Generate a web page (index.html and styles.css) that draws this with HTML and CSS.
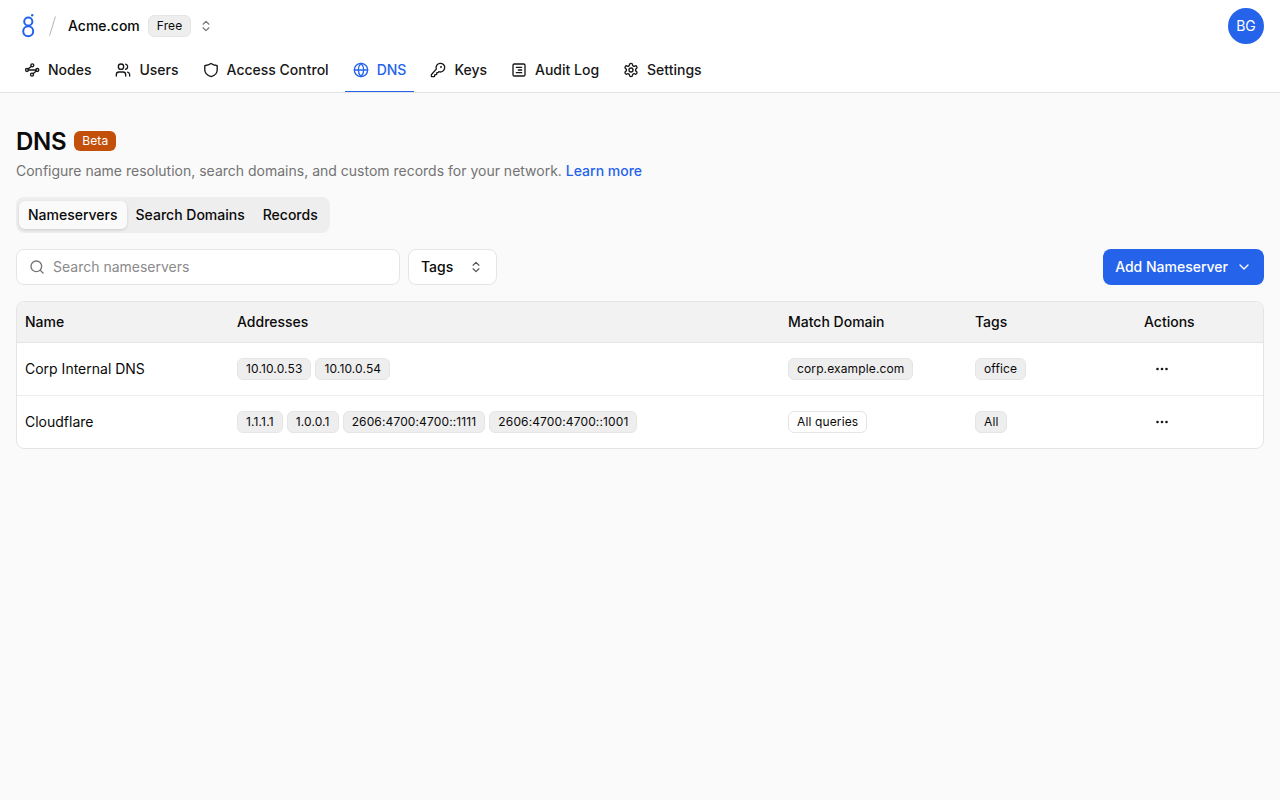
FILE: index.html
```html
<!DOCTYPE html>
<html lang="en">
<head>
    <meta charset="UTF-8">
    <meta name="viewport" content="width=device-width, initial-scale=1.0">
    <title>DNS</title>
    <link rel="stylesheet" href="styles.css">
</head>
<body>
    <header class="site-header">
        <div class="top-row">
            <div class="org">
                <svg class="logo" width="14" height="24" viewBox="0 0 14 24" fill="none" stroke="#2563eb" stroke-width="2">
                    <circle cx="7.300" cy="7.500" r="4.100"/>
                    <circle cx="7.200" cy="17.300" r="5"/>
                    <circle cx="11.200" cy="1.300" r="1.200" fill="#2563eb" stroke="none"/>
                </svg>
                <span class="slash"></span>
                <span class="org-name">Acme.com</span>
                <span class="badge plan">Free</span>
                <svg class="updown" width="14" height="14" viewBox="0 0 24 24" fill="none" stroke="#737373" stroke-width="2" stroke-linecap="round" stroke-linejoin="round"><path d="m7 15 5 5 5-5"/><path d="m7 9 5-5 5 5"/></svg>
            </div>
            <div class="avatar">BG</div>
        </div>
        <nav class="nav">
            <a class="nav-item">
                <svg class="icon" viewBox="0 0 24 24"><circle cx="4.500" cy="12" r="2.200"/><circle cx="20" cy="12" r="2.200"/><circle cx="12.500" cy="5" r="2.200"/><circle cx="12" cy="19" r="2.200"/><path d="M6.700 12h11M6 10.400l5-3.800M18.500 13.600l-5 3.900"/></svg>
                Nodes
            </a>
            <a class="nav-item">
                <svg class="icon" viewBox="0 0 24 24"><path d="M16 21v-2a4 4 0 0 0-4-4H6a4 4 0 0 0-4 4v2"/><circle cx="9" cy="7" r="4"/><path d="M22 21v-2a4 4 0 0 0-3-3.870"/><path d="M16 3.130a4 4 0 0 1 0 7.750"/></svg>
                Users
            </a>
            <a class="nav-item">
                <svg class="icon" viewBox="0 0 24 24"><path d="M12 2.200c2.600 1.900 5.400 2.900 8.600 3.100.4 0 .7.400.7.800V12c0 5.200-3.600 8.300-9 10-5.400-1.700-9.600-4.800-9.600-10V6.100c0-.4.300-.8.700-.8 3.200-.2 6-1.200 8.600-3.100z"/></svg>
                Access Control
            </a>
            <a class="nav-item active">
                <svg class="icon" viewBox="0 0 24 24"><circle cx="12" cy="12" r="10"/><path d="M12 2a14.500 14.500 0 0 0 0 20 14.500 14.500 0 0 0 0-20"/><path d="M2 12h20"/></svg>
                DNS
            </a>
            <a class="nav-item">
                <svg class="icon" viewBox="0 0 24 24"><path d="M2.590 18.410A2 2 0 0 0 2 19.830V21a1 1 0 0 0 1 1h3a1 1 0 0 0 1-1v-1a1 1 0 0 1 1-1h1a1 1 0 0 0 1-1v-1a1 1 0 0 1 1-1h.170a2 2 0 0 0 1.420-.590l.810-.810a6.500 6.500 0 1 0-4-4z"/><circle cx="16.500" cy="7.500" r=".5" fill="currentColor"/></svg>
                Keys
            </a>
            <a class="nav-item">
                <svg class="icon" viewBox="0 0 24 24"><rect x="3" y="3" width="18" height="18" rx="2"/><path d="M8 8h8M11 12h5M8 16h8"/></svg>
                Audit Log
            </a>
            <a class="nav-item">
                <svg class="icon" viewBox="0 0 24 24"><path d="M12.220 2h-.440a2 2 0 0 0-2 2v.180a2 2 0 0 1-1 1.730l-.430.250a2 2 0 0 1-2 0l-.150-.080a2 2 0 0 0-2.730.730l-.220.380a2 2 0 0 0 .730 2.730l.150.100a2 2 0 0 1 1 1.720v.510a2 2 0 0 1-1 1.740l-.150.090a2 2 0 0 0-.730 2.730l.220.380a2 2 0 0 0 2.730.730l.150-.080a2 2 0 0 1 2 0l.430.250a2 2 0 0 1 1 1.730V20a2 2 0 0 0 2 2h.440a2 2 0 0 0 2-2v-.180a2 2 0 0 1 1-1.730l.430-.250a2 2 0 0 1 2 0l.150.080a2 2 0 0 0 2.730-.730l.220-.390a2 2 0 0 0-.730-2.730l-.150-.080a2 2 0 0 1-1-1.740v-.500a2 2 0 0 1 1-1.740l.150-.090a2 2 0 0 0 .730-2.730l-.220-.380a2 2 0 0 0-2.730-.730l-.150.080a2 2 0 0 1-2 0l-.430-.250a2 2 0 0 1-1-1.730V4a2 2 0 0 0-2-2z"/><circle cx="12" cy="12" r="3"/></svg>
                Settings
            </a>
        </nav>
    </header>

    <main class="content">
        <div class="title-row">
            <h1>DNS</h1>
            <span class="beta">Beta</span>
        </div>
        <p class="lead">Configure name resolution, search domains, and custom records for your network. <a class="link">Learn more</a></p>

        <div class="segments">
            <button class="segment selected">Nameservers</button>
            <button class="segment">Search Domains</button>
            <button class="segment">Records</button>
        </div>

        <div class="toolbar">
            <label class="search">
                <svg width="16" height="16" viewBox="0 0 24 24" fill="none" stroke="#737373" stroke-width="2" stroke-linecap="round" stroke-linejoin="round"><circle cx="11" cy="11" r="8"/><path d="m21 21-4.300-4.300"/></svg>
                <input type="text" placeholder="Search nameservers">
            </label>
            <button class="select">
                Tags
                <svg width="14" height="14" viewBox="0 0 24 24" fill="none" stroke="#525252" stroke-width="2" stroke-linecap="round" stroke-linejoin="round"><path d="m7 15 5 5 5-5"/><path d="m7 9 5-5 5 5"/></svg>
            </button>
            <button class="primary">
                Add Nameserver
                <svg width="16" height="16" viewBox="0 0 24 24" fill="none" stroke="#fff" stroke-width="2" stroke-linecap="round" stroke-linejoin="round"><path d="m6 9 6 6 6-6"/></svg>
            </button>
        </div>

        <div class="table-wrap">
            <table>
                <thead>
                    <tr>
                        <th class="col-name">Name</th>
                        <th class="col-addr">Addresses</th>
                        <th class="col-match">Match Domain</th>
                        <th class="col-tags">Tags</th>
                        <th>Actions</th>
                    </tr>
                </thead>
                <tbody>
                    <tr>
                        <td>Corp Internal DNS</td>
                        <td><div class="chips"><span class="chip">10.10.0.53</span><span class="chip">10.10.0.54</span></div></td>
                        <td><div class="chips"><span class="chip">corp.example.com</span></div></td>
                        <td><div class="chips"><span class="chip">office</span></div></td>
                        <td><button class="more"><svg width="16" height="16" viewBox="0 0 16 16" fill="#171717"><circle cx="3.500" cy="8" r="1.300"/><circle cx="8" cy="8" r="1.300"/><circle cx="12.500" cy="8" r="1.300"/></svg></button></td>
                    </tr>
                    <tr>
                        <td>Cloudflare</td>
                        <td><div class="chips"><span class="chip">1.1.1.1</span><span class="chip">1.0.0.1</span><span class="chip">2606:4700:4700::1111</span><span class="chip">2606:4700:4700::1001</span></div></td>
                        <td><div class="chips"><span class="chip outline">All queries</span></div></td>
                        <td><div class="chips"><span class="chip">All</span></div></td>
                        <td><button class="more"><svg width="16" height="16" viewBox="0 0 16 16" fill="#171717"><circle cx="3.500" cy="8" r="1.300"/><circle cx="8" cy="8" r="1.300"/><circle cx="12.500" cy="8" r="1.300"/></svg></button></td>
                    </tr>
                </tbody>
            </table>
        </div>
    </main>
</body>
</html>
```

FILE: styles.css
```css
* { box-sizing: border-box; }
html, body { height: 100%; }
body { margin: 0; background-color: #fafafa; color: #0a0a0a; font-family: Inter, "Liberation Sans", sans-serif; font-size: 14px; line-height: 20px; }
button, input { font: inherit; color: inherit; }

.site-header { height: 93px; background-color: #fff; border-bottom: 1px solid #e5e5e5; }
.top-row { display: flex; justify-content: space-between; align-items: center; height: 52px; padding: 0 16px 0 21px; }
.org { display: flex; align-items: center; }
.slash { width: 1px; height: 20px; margin: 0 15px 0 17px; background-color: #b5b5b5; transform: rotate(17deg); }
.org-name { font-weight: 500; }
.badge { margin-left: 8px; padding: 0 8px; height: 22px; font-size: 12px; line-height: 20px; letter-spacing: 0.13px; background-color: #eeeeee; border: 1px solid #e5e5e5; border-radius: 6px; }
.updown { margin-left: 8px; }
.avatar { display: flex; align-items: center; justify-content: center; width: 36px; height: 36px; border-radius: 50%; background-color: #2563eb; color: #fff; }

.nav { display: flex; gap: 8px; padding: 0 16px; }
.nav-item { display: flex; align-items: center; gap: 8px; height: 40px; padding: 0 8px 4px; font-weight: 500; white-space: nowrap; border-bottom: 1px solid transparent; color: #171717; }
.nav-item.active { color: #2563eb; border-bottom-color: #2563eb; }
.icon { width: 16px; height: 16px; fill: none; stroke: currentColor; stroke-width: 2; stroke-linecap: round; stroke-linejoin: round; }

.content { padding: 36px 16px 0; }
.title-row { display: flex; align-items: center; gap: 8px; height: 24px; padding-top: 1px; }
h1 { margin: 0; font-size: 24px; line-height: 24px; font-weight: 600; letter-spacing: -0.3px; }
.beta { padding: 0 8px; height: 20px; font-size: 12px; line-height: 20px; letter-spacing: 0.13px; color: #fff; background-color: #c2500a; border-radius: 6px; margin-top: -2px; }
.lead { margin: 8px 0 0; color: #737373; }
.link { color: #2563eb; font-weight: 500; }

.segments { display: inline-flex; margin-top: 16px; padding: 4px 3px; height: 36px; background-color: #eeeeee; border-radius: 8px; vertical-align: top; }
.segment { padding: 0 9px; border: 0; background: none; font-weight: 500; border-radius: 6px; }
.segment.selected { background-color: #fafafa; box-shadow: 0 1px 3px rgba(0, 0, 0, 0.15); }

.toolbar { display: flex; align-items: center; gap: 8px; margin-top: 16px; }
.search { display: flex; align-items: center; gap: 8px; width: 384px; height: 36px; padding: 0 12px; background-color: #fff; border: 1px solid #e5e5e5; border-radius: 8px; }
.search input { flex: 1; min-width: 0; border: 0; outline: 0; padding: 0; background: none; }
.search input::placeholder { color: #8a8a8a; }
.select { display: flex; align-items: center; justify-content: space-between; width: 89px; height: 36px; padding: 0 13px 0 12px; background-color: #fff; border: 1px solid #e5e5e5; border-radius: 8px; font-weight: 500; }
.primary { display: flex; align-items: center; gap: 8px; margin-left: auto; height: 36px; padding: 0 12px; color: #fff; background-color: #2563eb; border: 0; border-radius: 8px; font-weight: 500; }

.table-wrap { margin-top: 16px; background-color: #fff; border: 1px solid #e5e5e5; border-radius: 8px; overflow: hidden; }
table { width: 100%; border-collapse: separate; border-spacing: 0; table-layout: fixed; }
th { height: 41px; padding: 0 8px; text-align: left; font-weight: 500; background-color: #f2f2f2; border-bottom: 1px solid #e5e5e5; }
td { height: 53px; padding: 0 8px; border-bottom: 1px solid #ececec; }
tbody tr:last-child td { border-bottom: 0; height: 52px; }
.col-name { width: 212px; }
.col-addr { width: 551px; }
.col-match { width: 187px; }
.col-tags { width: 169px; }
.chips { display: flex; gap: 4px; }
.chip { height: 22px; padding: 0 8px; font-size: 12px; line-height: 20px; letter-spacing: 0.13px; white-space: nowrap; background-color: #eeeeee; border: 1px solid #e5e5e5; border-radius: 6px; }
.chip.outline { background-color: #fff; }
.more { display: flex; padding: 0; margin-left: 10px; border: 0; background: none; }
```
